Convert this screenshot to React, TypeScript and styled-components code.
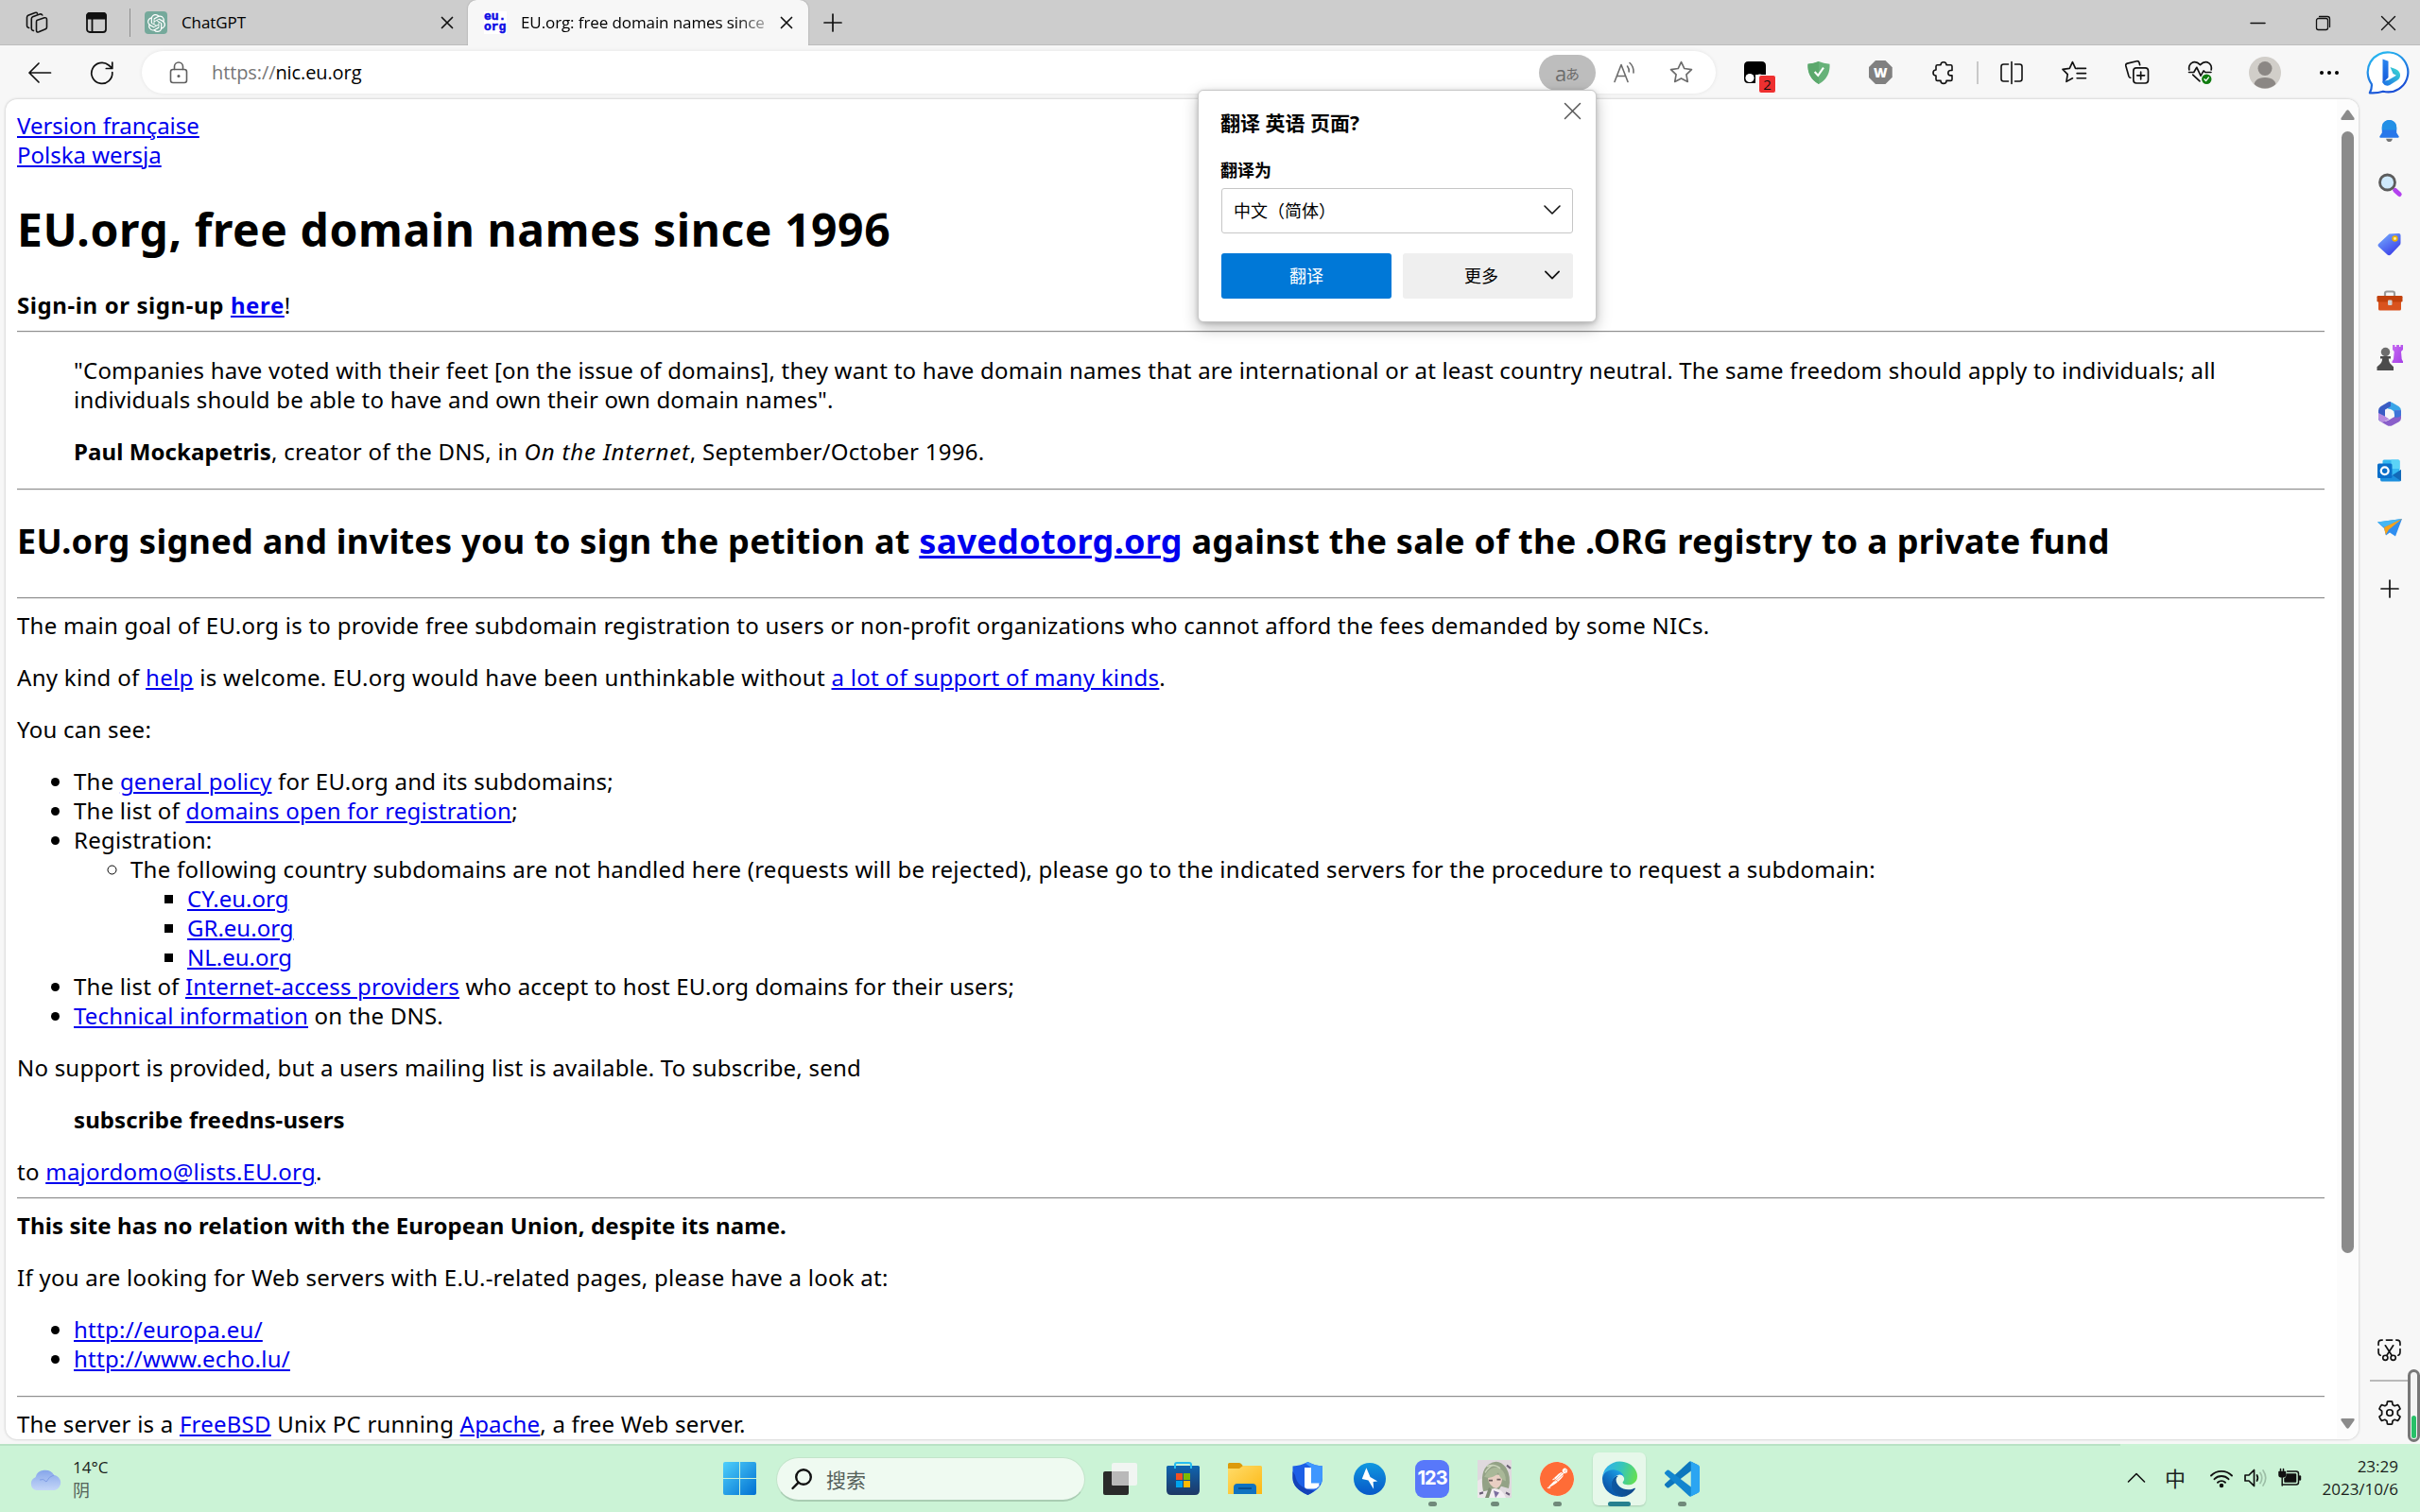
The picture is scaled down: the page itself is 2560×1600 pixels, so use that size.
import React from "react";
import styled, { createGlobalStyle, css } from "styled-components";
import { SiOpenai, SiPostman } from "react-icons/si";

const uiFont = `"Open Sans", "Noto Sans CJK SC", sans-serif`;

const GlobalStyle = createGlobalStyle`
  html, body { margin: 0; padding: 0; background: #f7f7f7; }
  body { width: 2560px; height: 1600px; overflow: hidden; font-family: ${uiFont}; color: #000; }
  *, *::before, *::after { box-sizing: border-box; }
`;

/* ---------- shell ---------- */

const Desktop = styled.div`
  position: relative;
  display: flex;
  flex-direction: column;
  width: 2560px;
  height: 1600px;
  overflow: hidden;
  background: #f7f7f7;
`;

const Cell = styled.div<{ $w?: number; $h?: number }>`
  display: flex;
  flex: none;
  align-items: center;
  justify-content: center;
  width: ${(p) => (p.$w ? `${p.$w}px` : "auto")};
  height: ${(p) => (p.$h ? `${p.$h}px` : "100%")};
`;

const Glyph = styled.svg<{ $s?: number; $c?: string; $sw?: number }>`
  display: block;
  flex: none;
  width: ${(p) => p.$s ?? 24}px;
  height: ${(p) => p.$s ?? 24}px;
  overflow: visible;
  fill: none;
  stroke: ${(p) => p.$c ?? "#111"};
  stroke-width: ${(p) => p.$sw ?? 1.6};
  stroke-linecap: round;
  stroke-linejoin: round;
`;

const Art = styled.svg<{ $w?: number; $h?: number }>`
  display: block;
  flex: none;
  width: ${(p) => p.$w ?? 24}px;
  height: ${(p) => p.$h ?? p.$w ?? 24}px;
  overflow: visible;
`;

/* ---------- tab strip ---------- */

const TabStrip = styled.header`
  display: flex;
  flex: none;
  align-items: center;
  height: 48px;
  background: #cdcdcd;
  box-shadow: inset 0 -1px 0 #bdbdbd;
`;

const StripDivider = styled.i`
  flex: none;
  width: 1px;
  height: 30px;
  margin-left: 3px;
  background: #8e8e8e;
`;

const Tab = styled.div<{ $active?: boolean }>`
  display: flex;
  flex: none;
  align-items: center;
  height: 48px;
  font-size: 17px;
  line-height: 24px;
  ${(p) =>
    p.$active
      ? css`
          width: 360px;
          padding: 0 17px 0 17px;
          background: #f7f7f7;
          border-radius: 9px 9px 0 0;
          box-shadow: 0 0 2px #9c9c9c;
          clip-path: inset(0 -3px 0 -3px);
        `
      : css`
          width: 357px;
          padding: 0 16px 0 15px;
        `}
`;

const TabTitle = styled.span<{ $fade?: boolean }>`
  flex: 1;
  min-width: 0;
  margin-left: 15px;
  overflow: hidden;
  white-space: nowrap;
  letter-spacing: -0.1px;
  ${(p) =>
    p.$fade &&
    css`
      margin-right: 12px;
      mask-image: linear-gradient(90deg, #000 86%, rgba(0, 0, 0, 0.25));
    `}
`;

const GptBadge = styled.span`
  display: flex;
  flex: none;
  align-items: center;
  justify-content: center;
  width: 24px;
  height: 24px;
  border-radius: 4px;
  background: #75a99b;
  color: #fff;
  font-size: 19px;
`;

const EuBadge = styled.span`
  display: flex;
  flex: none;
  flex-direction: column;
  justify-content: center;
  width: 24px;
  height: 24px;
  padding-bottom: 2px;
  background: #fff;
  color: #0c0ce4;
  font: 700 13px/11px "Liberation Mono", monospace;
  -webkit-text-stroke: 0.5px #0c0ce4;
`;

const Spacer = styled.div`
  flex: 1;
`;

/* ---------- toolbar ---------- */

const Toolbar = styled.div`
  display: flex;
  flex: none;
  align-items: center;
  height: 57px;
  padding: 0 2px 0 8px;
  background: #f7f7f7;
`;

const AddressBar = styled.div`
  display: flex;
  flex: none;
  align-items: center;
  width: 1665px;
  height: 45px;
  margin: 0 8px 0 8px;
  padding-left: 12px;
  border-radius: 23px;
  background: #fff;
  box-shadow: 0 0 4px rgba(0, 0, 0, 0.08);
  font-size: 20px;
  line-height: 28px;
`;

const Url = styled.span`
  margin-left: 8px;
  letter-spacing: -0.1px;
  color: #000;
`;

const Scheme = styled.span`
  color: #767676;
`;

const TranslatePill = styled.div`
  display: flex;
  align-items: center;
  justify-content: center;
  width: 60px;
  height: 38px;
  border-radius: 19px;
  background: #bdbdbd;
  color: #6c6c6c;
  font: 400 22px/24px "Open Sans", "Noto Sans CJK JP", sans-serif;
`;

const Small = styled.span`
  font-size: 15px;
  margin: 3px 0 0 -1px;
`;

const ExtWrap = styled.span`
  position: relative;
  display: block;
  width: 24px;
  height: 24px;
`;

const Count = styled.span`
  position: absolute;
  left: 15px;
  top: 14px;
  width: 19px;
  height: 20px;
  border: 1px solid #fff;
  border-radius: 3px;
  background: #ee3030;
  color: #111;
  font-size: 15px;
  line-height: 18px;
  text-align: center;
`;

const Octagon = styled.span`
  width: 25px;
  height: 25px;
  background: #808080;
  clip-path: polygon(29% 0, 71% 0, 100% 29%, 100% 71%, 71% 100%, 29% 100%, 0 71%, 0 29%);
  color: #fff;
  font: 800 14px/25px "Open Sans", sans-serif;
  text-align: center;
`;

const ToolDivider = styled.i`
  flex: none;
  width: 2px;
  height: 24px;
  margin: 0 1.75px;
  background: #c9c9c9;
`;

/* ---------- content ---------- */

const Main = styled.div`
  display: flex;
  flex: 1;
  min-height: 0;
  padding: 0 0 5px 6px;
`;

const PageCard = styled.div`
  display: flex;
  flex: none;
  width: 2489px;
  overflow: hidden;
  border-radius: 12px;
  background: #fff;
  box-shadow: 0 0 3px rgba(0, 0, 0, 0.25);
`;

const Doc = styled.article`
  flex: 1;
  min-width: 0;
  padding: 12px 13px 0 12px;
  font: 400 24px/31px "Noto Sans", sans-serif;
  letter-spacing: 0.255px;
`;

const H1 = styled.h1`
  margin: 32px 0;
  font-size: 48px;
  line-height: 64px;
  letter-spacing: 0.58px;
`;

const H2 = styled.h2`
  margin: 30px 0 35px;
  font-size: 36px;
  line-height: 48px;
  letter-spacing: 0.28px;
`;

/* $ls tunes tracking in px; $first drops the leading paragraph gap. */
const P = styled.p<{ $first?: boolean; $ls?: number }>`
  margin: ${(p) => (p.$first ? 0 : "24px 0 0")};
  letter-spacing: ${(p) => (p.$ls === undefined ? "inherit" : `${p.$ls}px`)};
`;

const Li = styled.li<{ $ls?: number }>`
  letter-spacing: ${(p) => (p.$ls === undefined ? "inherit" : `${p.$ls}px`)};
`;

const B = styled.b<{ $ls?: number }>`
  letter-spacing: ${(p) => p.$ls ?? 0.1}px;
`;

const I = styled.i`
  letter-spacing: 0.85px;
`;

const A = styled.a`
  color: #0000ee;
  text-decoration: underline;
  text-decoration-thickness: 2px;
  text-underline-offset: 2px;

  ${H2} & {
    text-decoration-thickness: 3px;
  }
`;

const Rule = styled.hr<{ $mt?: number; $mb?: number }>`
  height: 2px;
  margin: ${(p) => p.$mt ?? 12}px 0 ${(p) => p.$mb ?? 12}px;
  border: 0;
  border-top: 1px solid #8f8f8f;
  border-bottom: 1px solid #e8e8e8;
`;

const Quote = styled.blockquote`
  margin: 0 60px;
`;

const Ul = styled.ul<{ $top?: boolean; $kind?: string }>`
  margin: ${(p) => (p.$top ? "24px 0 0" : 0)};
  padding-left: 60px;
  list-style: ${(p) => p.$kind ?? "disc"};
`;

const ScrollBar = styled.div`
  display: flex;
  flex: none;
  flex-direction: column;
  align-items: center;
  width: 23px;
  padding: 11px 0 11px;
  background: #fcfcfc;
`;

const Thumb = styled.div`
  width: 13px;
  height: 1187px;
  margin-top: 12px;
  border-radius: 7px;
  background: #8b8b8b;
`;

const Sidebar = styled.aside`
  display: flex;
  flex: 1;
  flex-direction: column;
  align-items: center;
  margin-bottom: -2px;
  padding-top: 3px;
`;

const SideRule = styled.i`
  width: 42px;
  height: 2px;
  margin: 2px 0 3px;
  background: #b9b9b9;
`;

const Gauge = styled.div`
  position: absolute;
  left: 2547px;
  top: 1449px;
  display: flex;
  align-items: flex-end;
  width: 13px;
  height: 77px;
  padding: 1px;
  border: 3px solid #777;
  border-radius: 7px;
  background: #f4f4f4;
`;

const GaugeFill = styled.i`
  width: 100%;
  height: 24px;
  border-radius: 3px;
  background: #27c068;
`;

/* ---------- translate dialog ---------- */

const Dialog = styled.section`
  position: absolute;
  left: 1267px;
  top: 95px;
  display: flex;
  flex-direction: column;
  width: 422px;
  height: 246px;
  padding: 0 24px;
  border: 1px solid #c8c8c8;
  border-radius: 6px;
  background: #fff;
  box-shadow: 0 6px 16px rgba(0, 0, 0, 0.26), 0 1px 4px rgba(0, 0, 0, 0.16);
`;

const DialogHead = styled.div`
  display: flex;
  justify-content: space-between;
  height: 68px;
  margin-right: -9px;
`;

const DialogTitle = styled.h3`
  margin: 18px 0 0 -1px;
  font: 700 21px/32px "Open Sans", "Noto Sans CJK SC", sans-serif;
`;

const DialogLabel = styled.label`
  height: 35px;
  margin-left: -1px;
  font: 700 18px/30px "Noto Sans CJK SC", sans-serif;
`;

const SelectBox = styled.div`
  display: flex;
  align-items: center;
  justify-content: space-between;
  width: 372px;
  height: 48px;
  padding: 0 12px 2px;
  border: 1.5px solid #c6c6c6;
  border-radius: 3px;
  font: 400 18px/26px "Noto Sans CJK SC", sans-serif;
`;

const Actions = styled.div`
  display: flex;
  gap: 12px;
  width: 372px;
  margin-top: 21px;
`;

const Button = styled.div<{ $primary?: boolean }>`
  display: flex;
  align-items: center;
  justify-content: ${(p) => (p.$primary ? "center" : "space-between")};
  width: 180px;
  height: 48px;
  padding: ${(p) => (p.$primary ? "0 0 2px" : "0 14px 2px 65px")};
  border-radius: 3px;
  background: ${(p) => (p.$primary ? "#0078d7" : "#efefef")};
  color: ${(p) => (p.$primary ? "#fff" : "#000")};
  font: 400 18px/26px "Noto Sans CJK SC", sans-serif;
`;

/* ---------- taskbar ---------- */

const Taskbar = styled.footer`
  display: flex;
  flex: none;
  height: 72px;
  background: linear-gradient(90deg, #b9e2c5 2243px, #cbf3d6 2243px) top / 100% 2px no-repeat, #cbf3d6;
`;

const Weather = styled.div`
  display: flex;
  flex: none;
  align-items: center;
  gap: 11px;
  width: 749px;
  padding: 2px 0 0 30px;
`;

const Lines = styled.div<{ $right?: boolean }>`
  display: flex;
  flex-direction: column;
  text-align: ${(p) => (p.$right ? "right" : "left")};
  font-size: 17px;
  line-height: 24px;
  color: #1b1f1c;
`;

const Muted = styled.span`
  font-size: 18px;
  color: #55635a;
`;

const SearchBox = styled.div`
  display: flex;
  flex: none;
  align-items: center;
  gap: 15px;
  width: 327px;
  height: 47px;
  margin: 14px 4px 0 6px;
  padding-left: 15px;
  border: 1px solid #c2e4ca;
  border-bottom: 2px solid #a9cdb3;
  border-radius: 24px;
  background: #effaf1;
  color: #55605a;
  font: 400 21px/30px "Noto Sans CJK SC", sans-serif;
`;

const App66 = styled.div`
  display: flex;
  flex: none;
  flex-direction: column;
  align-items: center;
  width: 66px;
  padding-top: 9px;
`;

const AppPlate = styled.div<{ $active?: boolean }>`
  display: flex;
  align-items: center;
  justify-content: center;
  width: 56px;
  height: 56px;
  padding-bottom: 1px;
  border-radius: 6px;
  ${(p) =>
    p.$active &&
    css`
      background: #e6f8ea;
      box-shadow: 0 1px 2px rgba(0, 0, 0, 0.16);
    `}
`;

const RunMark = styled.i<{ $active?: boolean }>`
  width: ${(p) => (p.$active ? 24 : 9)}px;
  height: 5px;
  margin-top: -4px;
  border-radius: 3px;
  background: ${(p) => (p.$active ? "#26808f" : "#70897a")};
  z-index: 1;
`;

const Tile123 = styled.span`
  width: 36px;
  height: 40px;
  border-radius: 9px;
  background: #5878fa;
  color: #fff;
  font: 700 20px/39px Inter, sans-serif;
  letter-spacing: -1px;
  text-align: center;
`;

const PostmanMark = styled.span`
  width: 36px;
  height: 36px;
  border-radius: 50%;
  background: #fff;
  color: #ff6c37;
  font-size: 36px;
  line-height: 0;
`;

const Ime = styled.span`
  padding-bottom: 2px;
  font: 400 22px/30px "Noto Sans CJK SC", sans-serif;
  color: #1b1f1c;
`;

/* ---------- drawings ---------- */

const CrossIcon = ({ s = 12, sw = 1.7, c = "#111" }: { s?: number; sw?: number; c?: string }) => (
  <Glyph $s={s} $sw={sw} $c={c} viewBox={`0 0 ${s} ${s}`}>
    <path d={`M0.5 0.5L${s - 0.5} ${s - 0.5}M${s - 0.5} 0.5L0.5 ${s - 0.5}`} />
  </Glyph>
);

const PlusIcon = () => (
  <Glyph $s={18} $sw={1.7} viewBox="0 0 18 18">
    <path d="M9 0v18M0 9h18" />
  </Glyph>
);

const ChevronDown = ({ w = 18, sw = 1.6 }: { w?: number; sw?: number }) => (
  <Glyph $s={w} $sw={sw} viewBox="0 0 18 18">
    <path d="M1 5l8 8 8-8" />
  </Glyph>
);

const BingIcon = () => (
  <Art $w={46} viewBox="0 0 46 46">
    <defs>
      <linearGradient id="bingRing" x1="0" y1="0" x2="0.4" y2="1">
        <stop offset="0" stopColor="#28c4f4" />
        <stop offset="1" stopColor="#1a4fd6" />
      </linearGradient>
      <linearGradient id="bingB" x1="0" y1="0" x2="0" y2="1">
        <stop offset="0" stopColor="#2a86f0" />
        <stop offset="1" stopColor="#1557d8" />
      </linearGradient>
      <linearGradient id="bingC" x1="0" y1="1" x2="1" y2="0">
        <stop offset="0" stopColor="#1b6be8" />
        <stop offset="1" stopColor="#3de0d0" />
      </linearGradient>
    </defs>
    <path
      d="M23.5 1.5a21 21 0 1 1-7.5 41.2c-4 1.3-9 2-14.2 1.6 1.8-3.2 2.4-6 2-9.5A21 21 0 0 1 23.5 1.5z"
      fill="#fff"
      stroke="url(#bingRing)"
      strokeWidth="2.2"
      strokeLinejoin="round"
    />
    <path d="M15.5 8.500l6 2.300v17.200l-6 6z" fill="url(#bingB)" />
    <path d="M15.5 32c0 3.500 4 6 7.500 4l8-5c3.500-2.300 4-6.500 1.500-9.500-1.500-1.800-3.500-2.500-9-4.500l3 7 3.500 1.700-8.500 5z" fill="url(#bingC)" />
  </Art>
);

const BellIcon = () => (
  <Art $w={25} viewBox="0 0 24 26">
    <path d="M12 1c5 0 8 3.800 8 8.500V15l2.500 4c.4.800 0 1.500-.8 1.500H2.300c-.8 0-1.200-.7-.8-1.500L4 15V9.500C4 4.800 7 1 12 1z" fill="#2877ea" />
    <path d="M12 1c5 0 8 3.800 8 8.500V12H4V9.500C4 4.800 7 1 12 1z" fill="#2390e6" />
    <path d="M8.500 21.500h7c-.4 2.200-1.700 3.500-3.500 3.500s-3.100-1.300-3.500-3.500z" fill="#777" />
  </Art>
);

const LensIcon = () => (
  <Art $w={26} viewBox="0 2 26 26">
    <path d="M17 17l3 3" stroke="#8a8a8a" strokeWidth="3" />
    <path d="M18.800 18.500l4.400 4" stroke="#b441ef" strokeWidth="5" strokeLinecap="round" />
    <circle cx="10.5" cy="10" r="8" fill="#cfe9fb" stroke="#5c5c5c" strokeWidth="2.8" />
  </Art>
);

const TagIcon = () => (
  <Art $w={25} viewBox="0 0 25 25">
    <defs>
      <linearGradient id="tagFill" x1="0" y1="0" x2="0.7" y2="1">
        <stop offset="0" stopColor="#79b4ff" />
        <stop offset="1" stopColor="#3a3de8" />
      </linearGradient>
    </defs>
    <path d="M12.500 1.500L22.500 1Q24.500 1 24.500 3v8q0 1.500-1 2.500L14 23.500q-1.800 1.500-3.500 0L1.200 15q-1.400-1.500 0-3z" fill="url(#tagFill)" />
    <circle cx="18.5" cy="6.5" r="2.3" fill="#fff0b0" stroke="#f0b400" strokeWidth="1.7" />
  </Art>
);

const ToolboxIcon = () => (
  <Art $w={28} $h={22} viewBox="0 0 28 22">
    <path d="M9 7V3.500Q9 1.500 11 1.500h6q2 0 2 2V7" fill="none" stroke="#9a9a9a" strokeWidth="2.2" />
    <rect x="2" y="9" width="24" height="12.500" rx="1.5" fill="#d9531e" />
    <rect x="0.5" y="6" width="27" height="6.500" rx="1.2" fill="#c2410c" />
    <rect x="12" y="10.5" width="4.500" height="5.500" rx="1" fill="#d2d2d2" />
  </Art>
);

const ChessIcon = () => (
  <Art $w={28} viewBox="0 0 28 28">
    <defs>
      <linearGradient id="rookFill" x1="0" y1="0" x2="1" y2="1">
        <stop offset="0" stopColor="#c76bf2" />
        <stop offset="1" stopColor="#a53fe6" />
      </linearGradient>
    </defs>
    <path d="M17 1h2.500v2H21V1h3v2h1.500V1H28v5l-2 2 .700 8 1.300 2.500V20H16.500v-1.500L18 16l.700-8L17 6z" fill="url(#rookFill)" />
    <circle cx="9.5" cy="8.5" r="4.7" fill="#6d6d6d" />
    <path d="M4 13h11v2.500h-2.200c.2 3 1 4.800 3 6.500l2.200 2.200V28H.5v-3.800L3 22c2-1.700 3-3.500 3.200-6.500H4z" fill="#4c4c4c" />
  </Art>
);

const M365Icon = () => (
  <Art $w={26} viewBox="0 0 26 26">
    <path d="M10 1.200Q13-.5 16 1.200l6.500 3.700Q25 6.500 25 9.500V13l-7 1-2-5-6-2-4 3z" fill="#3aa5e8" />
    <path d="M10 1.200L3.500 5Q1 6.500 1 9.500v8q0 2 1.500 3.200L8 17V8.500L14 5V0Q12 0 10 1.200z" fill="#3a5cc4" />
    <path d="M25 9.500v8q0 2.500-2.500 4L16 25q-3 1.700-6 0l-7-4q5 1 9-1.500l6-3.500V9.500z" fill="#8a5fca" />
    <path d="M25 9.500v5q-2 3-7 2V9.500z" fill="#3f74d8" />
    <path d="M1 12v5.500q0 2.500 2.500 3.500 3 1 6-1l3-1.500-4.500-3z" fill="#b68be0" />
    <path d="M13 7.800l4.500 2.600v5.200L13 18.200l-4.500-2.600v-5.200z" fill="#f7f7f7" />
  </Art>
);

const OutlookIcon = () => (
  <Art $w={25} $h={24} viewBox="0 0 25 24">
    <rect x="5.5" y="0.5" width="18" height="16" rx="1.5" fill="#35b8f1" />
    <path d="M14.500.5H22q1.500 0 1.500 1.500v8h-9z" fill="#5bd3f7" />
    <path d="M3 12l12 5 10-6v10.500q0 2-2 2H5q-2 0-2-2z" fill="#1c8fdd" />
    <path d="M25 11v12l-9-6z" fill="#1269b8" />
    <rect x="0" y="4.5" width="15.5" height="15.5" rx="1.5" fill="#0a6fca" />
    <circle cx="7.7" cy="12.2" r="3.9" fill="none" stroke="#fff" strokeWidth="2.3" />
  </Art>
);

const PlaneIcon = () => (
  <Art $w={26} $h={19} viewBox="0 0 26 19">
    <path d="M0 3.500L26 0 19 18.500l-6-4-4 3-2-7.500z" fill="#2f8ef0" />
    <path d="M0 3.500L26 0 7 9z" fill="#45b7f3" />
    <path d="M7 9L26 0 12 11.500 8.700 17z" fill="#f5a31c" />
  </Art>
);

const WindowsLogo = () => (
  <Art $w={35} viewBox="0 0 35 35">
    <defs>
      <linearGradient id="winFill" x1="0" y1="0" x2="35" y2="35" gradientUnits="userSpaceOnUse">
        <stop offset="0" stopColor="#4fd0fb" />
        <stop offset="1" stopColor="#0070d2" />
      </linearGradient>
    </defs>
    <path d="M2 0h15v17H0V2Q0 0 2 0zM18 0h15q2 0 2 2v15H18zM0 18h17v17H2q-2 0-2-2zM18 18h17v15q0 2-2 2H18z" fill="url(#winFill)" />
  </Art>
);

const TaskViewIcon = () => (
  <Art $w={36} $h={34} viewBox="0 0 36 34">
    <rect x="0" y="9" width="27" height="25" rx="2" fill="#2a2a2a" />
    <rect x="9" y="0" width="27" height="24" rx="2" fill="#f2f4f3" opacity="0.95" />
    <path d="M9 9h18v15H11q-2 0-2-2z" fill="#b9b9b9" />
  </Art>
);

const StoreIcon = () => (
  <Art $w={35} viewBox="0 0 35 35">
    <defs>
      <linearGradient id="storeFill" x1="0" y1="0" x2="0" y2="1">
        <stop offset="0" stopColor="#0f65b0" />
        <stop offset="1" stopColor="#1d3765" />
      </linearGradient>
    </defs>
    <path d="M9 7V3q0-2 2-2h13q2 0 2 2v4" fill="none" stroke="#27bdf0" strokeWidth="2" />
    <path d="M1.500 4h32q1.500 0 1.500 1.500V30q0 5-5 5H5q-5 0-5-5V5.500Q0 4 1.500 4z" fill="url(#storeFill)" />
    <path d="M9 7V4M26 7V4" stroke="#27bdf0" strokeWidth="2" />
    <rect x="10" y="12" width="7" height="7" fill="#f25022" />
    <rect x="18" y="12" width="7" height="7" fill="#7fba00" />
    <rect x="10" y="20" width="7" height="7" fill="#00a4ef" />
    <rect x="18" y="20" width="7" height="7" fill="#ffb900" />
  </Art>
);

const FolderIcon = () => (
  <Art $w={36} $h={33} viewBox="0 0 36 33">
    <defs>
      <linearGradient id="folderFill" x1="0" y1="0" x2="1" y2="1">
        <stop offset="0" stopColor="#ffdc6b" />
        <stop offset="1" stopColor="#fdb813" />
      </linearGradient>
    </defs>
    <path d="M0 8V1.500Q0 0 1.500 0H12q1.500 0 2.500 1.500L16 3.500V8z" fill="#dc9a0b" />
    <path d="M0 6h12l4-3h18.500Q36 3 36 4.500V33H0z" fill="url(#folderFill)" />
    <path d="M6 33v-7q0-4 4-4h16q4 0 4 4v7z" fill="#0f72c0" />
    <path d="M11 27h14" stroke="#0a4f8f" strokeWidth="2" />
  </Art>
);

const GuardIcon = () => (
  <Art $w={33} $h={35} viewBox="0 0 33 35">
    <path d="M16.500 0Q24 4 32 4.500V17q0 11-15.500 18Q.5 28 .5 17V4.500Q9 4 16.500 0z" fill="#1d5fe6" />
    <path d="M16.500 0Q24 4 32 4.500V17q0 3-1.500 6H20V6L14 1.400z" fill="#3f97ff" />
    <path d="M.5 10V17q0 11 16 18 4-2 7-4.500Q5 28 3 14z" fill="#1442b8" />
    <path d="M13 6h7v16.500h8.500v3Q26 28.500 23 28.500H16q-3 0-3-3z" fill="#fff" />
  </Art>
);

const BoltIcon = () => (
  <Art $w={34} viewBox="0 0 33 33">
    <defs>
      <linearGradient id="boltFill" x1="0" y1="0" x2="0" y2="1">
        <stop offset="0" stopColor="#1098e0" />
        <stop offset="1" stopColor="#0757c8" />
      </linearGradient>
    </defs>
    <circle cx="16.5" cy="16.5" r="16.5" fill="url(#boltFill)" />
    <path d="M13 5L8.500 16.500l6.500 1.500L20.500 27l-.5-7.500 4.500-.5L17 14.500z" fill="#fff" />
  </Art>
);

const PortraitIcon = () => (
  <Art $w={36} $h={40} viewBox="0 0 36 36" preserveAspectRatio="none">
    <rect width="36" height="36" fill="#dfd9de" />
    <path d="M0 20q8-6 12 0t6 16H0z" fill="#ece6ea" />
    <path d="M6 30Q2 10 12 4q10-6 18 3 6 9 3 20l-8-2-6 8-8-4z" fill="#93a286" />
    <path d="M11 17q8-5 15-2 1 9-6 12-8-2-9-10z" fill="#e9cfc3" />
    <path d="M7 16Q14 4 24 8q6 4 6 12-6-1-8-8-6 7-15 4z" fill="#a9b898" />
    <path d="M10 6q8-3 14 2M8 12q4-6 9-7" fill="none" stroke="#c9d4ba" strokeWidth="1.4" />
    <path d="M8 36q2-9 10-9t12 9z" fill="#f3eef2" />
    <path d="M12 19.500h4M20.500 18.500h4" stroke="#6a5a5a" strokeWidth="1.6" />
    <path d="M12 26l-4 10h4l3-8z" fill="#7f8d75" />
    <path d="M17 29l6 2-4 5z" fill="#7c6fa0" />
    <path d="M31 5l4 3M30 31l4 2M2 32l4-1" stroke="#6b5f78" strokeWidth="2" />
  </Art>
);

const EdgeLogo = () => (
  <Art $w={37} $h={38} viewBox="0 0 256 256">
    <defs>
      <linearGradient id="edgeA" x1="60" y1="177" x2="240" y2="177" gradientUnits="userSpaceOnUse">
        <stop offset="0" stopColor="#0c59a4" />
        <stop offset="1" stopColor="#114a8b" />
      </linearGradient>
      <linearGradient id="edgeB" x1="150" y1="100" x2="46" y2="215" gradientUnits="userSpaceOnUse">
        <stop offset="0" stopColor="#1b9de2" />
        <stop offset="0.6" stopColor="#0f70c2" />
        <stop offset="1" stopColor="#0a57a8" />
      </linearGradient>
      <linearGradient id="edgeC" x1="10" y1="60" x2="250" y2="130" gradientUnits="userSpaceOnUse">
        <stop offset="0" stopColor="#2fb0ee" />
        <stop offset="0.5" stopColor="#36c6b8" />
        <stop offset="1" stopColor="#66e04e" />
      </linearGradient>
    </defs>
    <path fill="url(#edgeA)" d="M235.700 195.500c-3.400 1.800-6.900 3.400-10.600 4.700a101.900 101.900 0 0 1-35.900 6.400c-47.300 0-88.500-32.500-88.500-74.300a31.500 31.500 0 0 1 16.400-27.300c-42.800 1.800-53.800 46.400-53.800 72.500 0 73.900 68.100 81.400 82.800 81.400 7.900 0 19.800-2.300 27-4.600l1.300-.4a128.300 128.300 0 0 0 66.600-52.800 4 4 0 0 0-5.300-5.600z" />
    <path fill="url(#edgeB)" d="M105.700 241.400a79.200 79.200 0 0 1-22.700-21.300 80.700 80.700 0 0 1 29.500-120c3.200-1.500 8.500-4.100 15.600-4a32.400 32.400 0 0 1 25.700 13 31.900 31.900 0 0 1 6.300 18.700c0-.2 24.500-79.600-80-79.600-43.900 0-80 41.600-80 78.200a130.200 130.200 0 0 0 12.100 56 128 128 0 0 0 156.400 67 75.500 75.500 0 0 1-62.800-8z" />
    <path fill="url(#edgeC)" d="M152.300 148.900c-.8 1-3.300 2.500-3.300 5.700 0 2.600 1.700 5.100 4.700 7.200 14.400 10 41.500 8.700 41.600 8.700 10.700 0 21.100-2.900 30.300-8.300a61.400 61.400 0 0 0 30.400-52.900c.3-22.400-8-37.300-11.300-43.900C223.500 23.900 177.700 0 128 0A128 128 0 0 0 0 126.200c.5-36.500 36.800-66 80-66 3.500 0 23.500.3 42 10.100 16.300 8.600 24.900 18.900 30.800 29.200 6.200 10.700 7.300 24.100 7.300 29.500 0 5.300-2.700 13.300-7.800 19.900z" />
  </Art>
);

const CodeLogo = () => (
  <Art $w={37} $h={38} viewBox="0 0 100 100">
    <path fill="#0d76bd" d="M96.500 10.800L75.900.9a6.200 6.200 0 0 0-7.100 1.200L1.300 63.600a4.200 4.200 0 0 0 0 6.100l5.500 5a4.200 4.200 0 0 0 5.300.2l81.200-61.600z" />
    <path fill="#1285cf" d="M96.500 89.200L75.900 99.100a6.200 6.200 0 0 1-7.100-1.200L1.300 36.400a4.200 4.200 0 0 1 0-6.100l5.500-5a4.200 4.200 0 0 1 5.300-.2l81.200 61.600z" />
    <path fill="#2ba5f2" d="M75.900 99.100a6.200 6.200 0 0 1-7.100-1.200c2.300 2.300 6.200.7 6.200-2.600V4.700c0-3.300-3.900-4.900-6.200-2.600A6.200 6.200 0 0 1 75.900.9l20.600 9.900a6.200 6.200 0 0 1 3.500 5.600v67.200a6.200 6.200 0 0 1-3.500 5.600z" />
  </Art>
);

const CloudIcon = () => (
  <Art $w={36} $h={23} viewBox="0 0 36 23">
    <defs>
      <linearGradient id="cloudFill" x1="0" y1="0" x2="0" y2="1">
        <stop offset="0" stopColor="#86a6ea" />
        <stop offset="1" stopColor="#c4d6f8" />
      </linearGradient>
    </defs>
    <path d="M8 23a8 7.500 0 0 1-.5-13.800A10.500 9.500 0 0 1 27 6.800 8.500 8.300 0 0 1 28 23z" fill="url(#cloudFill)" />
    <path d="M12 12q4-2 7 2 3-6 8-7" fill="none" stroke="#7f9de6" strokeWidth="1" />
  </Art>
);

const taskApps: { name: string; icon: React.ReactNode; running?: boolean; active?: boolean }[] = [
  { name: "taskview", icon: <TaskViewIcon /> },
  { name: "store", icon: <StoreIcon /> },
  { name: "explorer", icon: <FolderIcon /> },
  { name: "guard", icon: <GuardIcon /> },
  { name: "bolt", icon: <BoltIcon /> },
  { name: "pan", icon: <Tile123>123</Tile123>, running: true },
  { name: "portrait", icon: <PortraitIcon />, running: true },
  { name: "postman", icon: <PostmanMark><SiPostman /></PostmanMark>, running: true },
  { name: "edge", icon: <EdgeLogo />, running: true, active: true },
  { name: "code", icon: <CodeLogo />, running: true },
];

const sideIcons = [BellIcon, LensIcon, TagIcon, ToolboxIcon, ChessIcon, M365Icon, OutlookIcon, PlaneIcon];

/* ---------- sections ---------- */

const Tabs = () => (
  <TabStrip>
    <Cell $w={77}>
      <Glyph $s={24} viewBox="0 0 24 24">
        <path d="M12 9.500l8-2.700q2.500-.6 2.500 2v8q0 1.500-1.300 2L14 21.800q-2.500.8-2.500-1.800v-8.500q0-1.500.5-2z" />
        <path d="M8.500 20.500L7.300 20Q6.300 19.500 6.300 18V8q0-1.500 1.300-2.200L15 3q2-.6 2.800 1" />
        <path d="M3.700 17.500L2.500 17Q1.500 16.500 1.500 15V6.500Q1.500 5 2.800 4.300L10 1.500q1.800-.6 2.500.7" />
      </Glyph>
    </Cell>
    <Cell $w={50}>
      <Glyph $s={22} $sw={1.8} viewBox="0 0 22 22">
        <path d="M1 6.500V4q0-3 3-3h14q3 0 3 3v2.500z" fill="#111" />
        <rect x="1" y="1" width="20" height="20" rx="3" />
        <path d="M6.500 6.500V21" />
      </Glyph>
    </Cell>
    <Cell $w={7} />
    <StripDivider />
    <Tab>
      <GptBadge><SiOpenai /></GptBadge>
      <TabTitle>ChatGPT</TabTitle>
      <CrossIcon />
    </Tab>
    <Tab $active>
      <EuBadge><span>eu.</span><span>org</span></EuBadge>
      <TabTitle $fade>EU.org: free domain names since</TabTitle>
      <CrossIcon />
    </Tab>
    <Cell $w={52}><PlusIcon /></Cell>
    <Spacer />
    <Cell $w={69}><Glyph $s={15} $sw={1.5} viewBox="0 0 15 15"><path d="M0 7.500h15" /></Glyph></Cell>
    <Cell $w={69}>
      <Glyph $s={15} $sw={1.3} viewBox="0 0 15 15">
        <rect x="0.5" y="2.5" width="12" height="12" rx="2" />
        <path d="M3.500.5H12q2.500 0 2.500 2.500v8.500" />
      </Glyph>
    </Cell>
    <Cell $w={68}><CrossIcon s={15} sw={1.4} /></Cell>
  </TabStrip>
);

const Tools = () => (
  <Toolbar>
    <Cell $w={67}>
      <Glyph viewBox="0 0 24 24" $sw={1.7}><path d="M23.500 12H1M11 2L1 12l10 10" /></Glyph>
    </Cell>
    <Cell $w={66}>
      <Glyph viewBox="0 0 24 24" $sw={1.7}><path d="M22.800 11.500A11 11 0 1 1 19 4l3.500 3M22.800 1v6.500h-6.500" /></Glyph>
    </Cell>
    <Cell $w={1} />
    <AddressBar>
      <Cell $w={54}>
        <Glyph $c="#5f5f5f" viewBox="0 0 24 24">
          <rect x="3.5" y="8.5" width="17" height="14" rx="2.5" />
          <path d="M7.500 8.500V5.500a4.500 4.500 0 0 1 9 0v3" />
          <circle cx="12" cy="15.5" r="0.8" fill="#5f5f5f" />
        </Glyph>
      </Cell>
      <Url><Scheme>https://</Scheme>nic.eu.org</Url>
      <Spacer />
      <TranslatePill>a<Small>あ</Small></TranslatePill>
      <Cell $w={62}>
        <Glyph $c="#6c6c6c" viewBox="0 0 24 24">
          <path d="M1 21.500L8 3.500l7 18M3.500 15.500h9M14.500 5q2 2.500 1.700 6M17 1.500q4.500 4 4 10.500" />
        </Glyph>
      </Cell>
      <Cell $w={57}>
        <Glyph $s={25} $c="#6c6c6c" viewBox="0 0 24 24">
          <path d="M12 1.500l3.200 6.700 7.300 1-5.300 5.100 1.300 7.300L12 18.200l-6.500 3.400 1.300-7.300L1.500 9.200l7.300-1z" />
        </Glyph>
      </Cell>
      <Cell $w={8} />
    </AddressBar>
    <Cell $w={68}>
      <ExtWrap>
        <Art viewBox="0 0 24 24">
          <path d="M4.500 0h14q4.500 0 4.500 4.500V14H12v9H4.500Q0 23 0 18.500v-14Q0 0 4.500 0z" fill="#000" />
          <circle cx="6" cy="17.5" r="4.6" fill="#fff" />
          <circle cx="16.5" cy="17" r="3.6" fill="#fff" />
        </Art>
        <Count>2</Count>
      </ExtWrap>
    </Cell>
    <Cell $w={65}>
      <Art viewBox="0 0 24 25">
        <path d="M12 0Q17 2.500 24 2.800 25 17.500 12 25-1 17.500 0 2.800 7 2.500 12 0z" fill="#67b279" />
        <path d="M12 0v25Q-1 17.500 0 2.800 7 2.500 12 0z" fill="#5ba86c" />
        <path d="M7.500 11.500l3.700 4 6-8.500" fill="none" stroke="#fff" strokeWidth="2.2" />
      </Art>
    </Cell>
    <Cell $w={66.5}><Octagon>W</Octagon></Cell>
    <Cell $w={66.5}>
      <Glyph viewBox="0 0 24 24">
        <path d="M9 3.800a3 3 0 0 1 6 0h4.500q1.500 0 1.500 1.500V9.500h-1.500a2.700 2.700 0 0 0 0 5.400H21v4q0 1.500-1.500 1.500H15a3 3 0 0 1-6 0H5.500Q4 20.400 4 18.900V15a3 3 0 0 1 0-6V5.300q0-1.500 1.500-1.500z" />
      </Glyph>
    </Cell>
    <ToolDivider />
    <Cell $w={66.5}>
      <Glyph viewBox="0 0 24 24">
        <path d="M12 .5v23M8.500 3h-5Q1 3 1 5.500v13Q1 21 3.500 21h5M15.500 3h5Q23 3 23 5.500v13q0 2.500-2.500 2.500h-5" />
      </Glyph>
    </Cell>
    <Cell $w={66.5}>
      <Glyph $s={25} viewBox="0 0 24 24">
        <path d="M14.500 8.200L13 8 10 1.500 7 8l-7 1 5 5-1.200 7.500L10 18M14.500 8h9M14.500 13h9M14.500 18h9" />
      </Glyph>
    </Cell>
    <Cell $w={66.5}>
      <Glyph $s={25} viewBox="0 0 24 24">
        <rect x="8.5" y="7.5" width="15" height="15.5" rx="3" />
        <path d="M16 11.500v7.500M12.200 15.200h7.600M5.500 17.500Q4.300 17.500 3.800 16L.8 5.500Q.4 3.600 2.300 3l9.500-2.300q2-.4 2.600 1.500l.6 2.300" />
      </Glyph>
    </Cell>
    <Cell $w={66.5}>
      <Glyph $s={25} viewBox="0 0 24 24">
        <path d="M.8 9.500Q0 5 3 2.800 7.500-.2 12 4.500 16.500-.2 21 2.800q3 2.200 2.200 6.700M4.500 14.500L11.500 21M.5 12h5l3-5 4 8.500 3-5 1.500 1.500h6" />
        <circle cx="18.5" cy="19" r="5" fill="#107c10" stroke="none" />
        <path d="M16.300 19l1.500 1.700 2.800-3.500" stroke="#fff" strokeWidth="1.3" />
      </Glyph>
    </Cell>
    <Cell $w={70}>
      <Art $w={34} viewBox="0 0 34 34">
        <defs><clipPath id="face"><circle cx="17" cy="17" r="16.5" /></clipPath></defs>
        <circle cx="17" cy="17" r="17" fill="#d1cec9" />
        <g clipPath="url(#face)" fill="#8b8784">
          <circle cx="17" cy="12.5" r="7.5" />
          <path d="M5 33q0-11 12-11t12 11v3H5z" />
        </g>
      </Art>
    </Cell>
    <Cell $w={67}>
      <Art $w={20} $h={4} viewBox="0 0 20 4">
        <circle cx="2" cy="2" r="2" /><circle cx="10" cy="2" r="2" /><circle cx="18" cy="2" r="2" />
      </Art>
    </Cell>
    <Cell $w={60}><BingIcon /></Cell>
  </Toolbar>
);

const Article = () => (
  <Doc>
    <P $first $ls={0}>
      <A>Version française</A>
      <br />
      <A>Polska wersja</A>
    </P>
    <H1>EU.org, free domain names since 1996</H1>
    <P $first><B $ls={0.6}>Sign-in or sign-up <A>here</A></B>!</P>
    <Rule $mb={24} />
    <Quote>
      <P $first $ls={0.21}>
        "Companies have voted with their feet [on the issue of domains], they want to have domain names that are
        international or at least country neutral. The same freedom should apply to individuals; all
        <br />
        individuals should be able to have and own their own domain names".
      </P>
      <P><B>Paul Mockapetris</B>, creator of the DNS, in <I>On the Internet</I>, September/October 1996.</P>
    </Quote>
    <Rule $mt={24} />
    <H2>EU.org signed and invites you to sign the petition at <A>savedotorg.org</A> against the sale of the .ORG registry to a private fund</H2>
    <Rule />
    <P $first $ls={0.265}>
      The main goal of EU.org is to provide free subdomain registration to users or non-profit organizations who cannot
      afford the fees demanded by some NICs.
    </P>
    <P $ls={0.3}>
      Any kind of <A>help</A> is welcome. EU.org would have been unthinkable without <A>a lot of support of many kinds</A>.
    </P>
    <P>You can see:</P>
    <Ul $top>
      <Li $ls={0.23}>The <A>general policy</A> for EU.org and its subdomains;</Li>
      <Li $ls={0.23}>The list of <A>domains open for registration</A>;</Li>
      <Li>
        Registration:
        <Ul $kind="circle">
          <Li>
            The following country subdomains are not handled here (requests will be rejected), please go to the
            indicated servers for the procedure to request a subdomain:
            <Ul $kind="square">
              <Li $ls={0}><A>CY.eu.org</A></Li>
              <Li $ls={0}><A>GR.eu.org</A></Li>
              <Li $ls={0}><A>NL.eu.org</A></Li>
            </Ul>
          </Li>
        </Ul>
      </Li>
      <Li $ls={0.185}>The list of <A>Internet-access providers</A> who accept to host EU.org domains for their users;</Li>
      <Li $ls={0.2}><A>Technical information</A> on the DNS.</Li>
    </Ul>
    <P $ls={0.215}>No support is provided, but a users mailing list is available. To subscribe, send</P>
    <Quote><P><B>subscribe freedns-users</B></P></Quote>
    <P>to <A>majordomo@lists.EU.org</A>.</P>
    <Rule />
    <P $first><B>This site has no relation with the European Union, despite its name.</B></P>
    <P>If you are looking for Web servers with E.U.-related pages, please have a look at:</P>
    <Ul $top>
      <Li><A>http://europa.eu/</A></Li>
      <Li><A>http://www.echo.lu/</A></Li>
    </Ul>
    <Rule $mt={24} />
    <P $first $ls={0.22}>The server is a <A>FreeBSD</A> Unix PC running <A>Apache</A>, a free Web server.</P>
  </Doc>
);

const TranslateDialog = () => (
  <Dialog>
    <DialogHead>
      <DialogTitle>翻译 英语 页面?</DialogTitle>
      <Cell $h={43} $w={20}><CrossIcon s={17} sw={1.5} c="#555" /></Cell>
    </DialogHead>
    <DialogLabel>翻译为</DialogLabel>
    <SelectBox>中文（简体）<ChevronDown /></SelectBox>
    <Actions>
      <Button $primary>翻译</Button>
      <Button>更多<ChevronDown w={16} sw={2} /></Button>
    </Actions>
  </Dialog>
);

const Dock = () => (
  <Taskbar>
    <Weather>
      <CloudIcon />
      <Lines><span>14°C</span><Muted>阴</Muted></Lines>
    </Weather>
    <App66><AppPlate><WindowsLogo /></AppPlate></App66>
    <SearchBox>
      <Glyph $s={22} $sw={2.4} viewBox="0 0 22 22">
        <circle cx="13" cy="9" r="7.8" />
        <path d="M7.500 14.800L1.500 21" />
      </Glyph>
      搜索
    </SearchBox>
    {taskApps.map((a) => (
      <App66 key={a.name}>
        <AppPlate $active={a.active}>{a.icon}</AppPlate>
        {a.running && <RunMark $active={a.active} />}
      </App66>
    ))}
    <Spacer />
    <Cell $w={48}><Glyph $s={18} viewBox="0 0 18 18"><path d="M.5 13L9 4.500l8.500 8.500" /></Glyph></Cell>
    <Cell $w={34}><Ime>中</Ime></Cell>
    <Cell $w={14} />
    <Cell $w={36}>
      <Glyph $s={24} $sw={1.9} viewBox="0 0 24 24">
        <path d="M1 9.500a15.500 15.500 0 0 1 22 0M4.500 13.200a10.500 10.500 0 0 1 15 0M8 16.800a5.700 5.700 0 0 1 8 0" />
        <circle cx="12" cy="20" r="1.3" fill="#111" />
      </Glyph>
    </Cell>
    <Cell $w={36}>
      <Glyph $s={24} $sw={1.7} viewBox="0 0 24 24">
        <path d="M1 9h4l5.500-5.500v17L5 15H1zM13.500 9q1.700 3 0 6" />
        <path d="M17 6.500q3.500 5.500 0 11M20 4q5.500 8 0 16" stroke="#9dbfa7" />
      </Glyph>
    </Cell>
    <Cell $w={36}>
      <Glyph $s={24} $sw={1.5} viewBox="0 0 24 24">
        <path d="M2.500 2.500v3M5.500 2.500v3M1 5.500h6.500v3.500Q7.500 11 4.200 11 1 11 1 9zM4.200 11v9" fill="#111" />
        <path d="M9.500 5H19q2.500 0 2.500 2.500v9Q21.500 19 19 19H5" />
        <path d="M9 8h9.500v8H7v-3.500q2-.5 2-2.500z" fill="#111" />
        <path d="M23 10.500v3" strokeWidth="2.4" />
      </Glyph>
    </Cell>
    <Cell $w={120}>
      <Cell $w={97}><Spacer /><Lines $right><span>23:29</span><span>2023/10/6</span></Lines></Cell>
      <Spacer />
    </Cell>
  </Taskbar>
);

export default function App() {
  return (
    <>
      <GlobalStyle />
      <Desktop>
        <Tabs />
        <Tools />
        <Main>
          <PageCard>
            <Article />
            <ScrollBar>
              <Art $w={15} $h={11} viewBox="0 0 15 11"><path d="M6 1.200Q7.500-.8 9 1.200L14.500 9q.8 2-1 2h-12q-1.800 0-1-2z" fill="#8b8b8b" /></Art>
              <Thumb />
              <Spacer />
              <Art $w={15} $h={11} viewBox="0 0 15 11"><path d="M6 9.800q1.500 2 3 0L14.500 2q.8-2-1-2h-12Q-.3 0 .5 2z" fill="#8b8b8b" /></Art>
            </ScrollBar>
          </PageCard>
          <Sidebar>
            {sideIcons.map((Icon, i) => (
              <Cell key={i} $w={60} $h={60}><Icon /></Cell>
            ))}
            <Cell $w={60} $h={70}><PlusIcon /></Cell>
            <Spacer />
            <Cell $w={60} $h={60}>
              <Glyph $s={25} viewBox="0 0 24 24">
                <path d="M1 7V5q0-3 3-3h1M9 2h6M19 2h1q3 0 3 3v2M1 11v3q0 3 2 3.500M23 11v3q0 3-2 3.500M8 7.500l6.500 10M16 7.500l-6.500 10" />
                <circle cx="8" cy="20" r="2.5" />
                <circle cx="16" cy="20" r="2.5" />
              </Glyph>
            </Cell>
            <SideRule />
            <Cell $w={60} $h={60}>
              <Glyph $s={26} viewBox="0 0 24 24">
                <circle cx="12" cy="12" r="3" />
                <path d="M9.700 1q2.300-.5 4.600 0l.6 3.200 1.900 1.100 3.100-1.100q1.600 1.700 2.300 4L19.700 10.300v3.400l2.500 2.100q-.7 2.300-2.300 4l-3.100-1.100-1.900 1.100-.6 3.200q-2.300.5-4.600 0l-.6-3.200-1.900-1.100-3.100 1.100q-1.600-1.700-2.300-4l2.500-2.100v-3.400L1.800 8.200q.7-2.300 2.300-4l3.100 1.100 1.900-1.100z" />
              </Glyph>
            </Cell>
          </Sidebar>
        </Main>
        <Dock />
        <Gauge><GaugeFill /></Gauge>
        <TranslateDialog />
      </Desktop>
    </>
  );
}
